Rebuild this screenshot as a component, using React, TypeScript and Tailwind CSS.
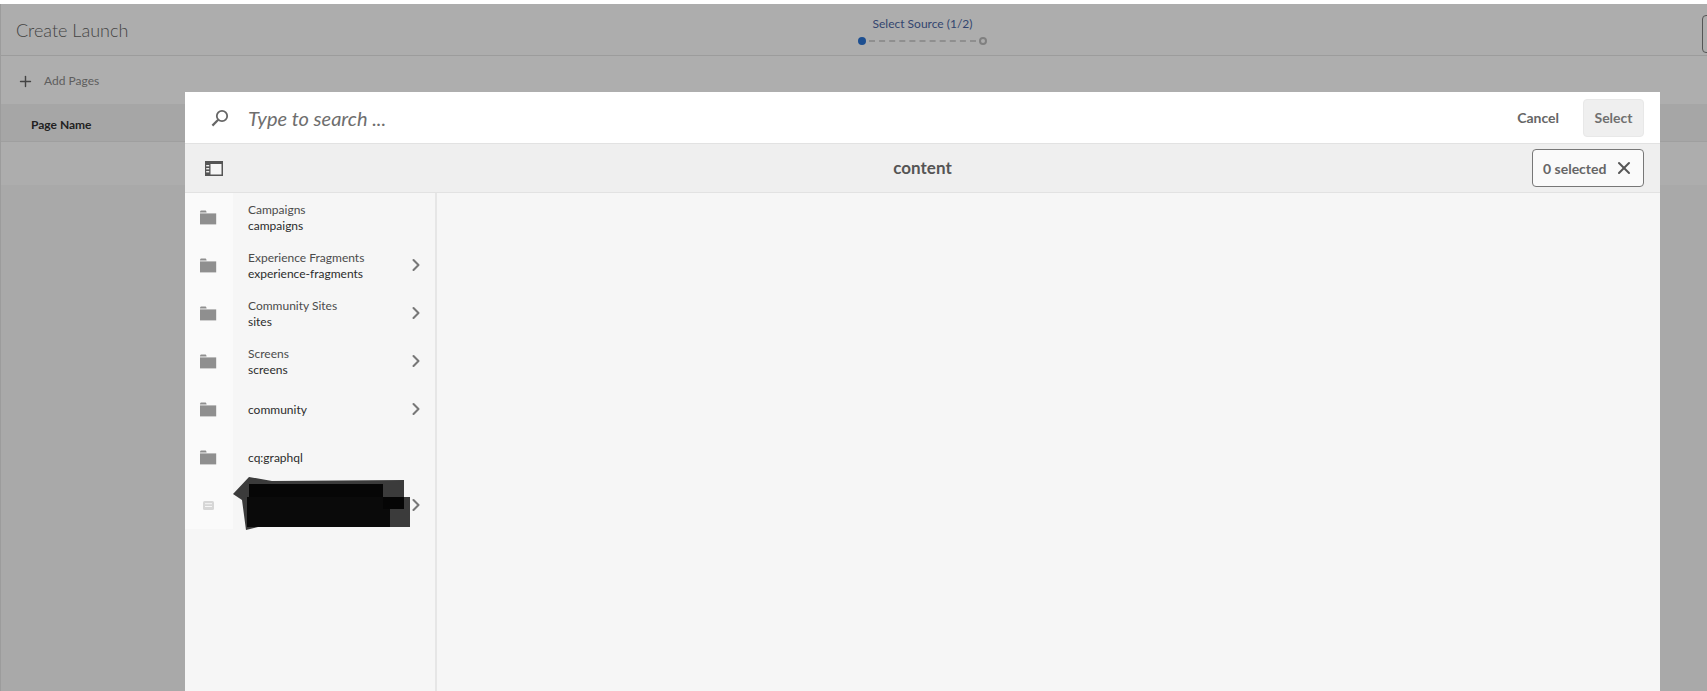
import { ChevronRight, Plus, X } from 'lucide-react';

const rows = [
  { title: 'Campaigns', name: 'campaigns', more: false },
  { title: 'Experience Fragments', name: 'experience-fragments', more: true },
  { title: 'Community Sites', name: 'sites', more: true },
  { title: 'Screens', name: 'screens', more: true },
  { title: '', name: 'community', more: true },
  { title: '', name: 'cq:graphql', more: false },
];

function FolderIcon() {
  return (
    <svg width="17" height="15" viewBox="0 0 17 15">
      <path d="M0 2.5 C0 1 .6 .6 1.5 .6 H5 C6 .6 6.4 1.2 6.6 2.4 H0 Z" fill="#8f8f8f" />
      <path d="M0 3.4 H16.2 V14.4 H0 Z" fill="#8f8f8f" />
    </svg>
  );
}

function SearchIcon() {
  return (
    <svg width="18" height="18" viewBox="0 0 18 18" fill="none" stroke="#666" strokeWidth="1.8">
      <circle cx="11" cy="7" r="5.2" />
      <path d="M7.2 10.8 L1.4 16.6" strokeWidth="2.2" />
    </svg>
  );
}

function RailIcon() {
  return (
    <svg width="18" height="15" viewBox="0 0 18 15">
      <rect x="0" y="0" width="18" height="15" fill="#555" />
      <rect x="5.5" y="3" width="11" height="10.5" fill="#f6f6f6" />
      <rect x="1.2" y="4" width="3" height="1.4" fill="#eee" />
      <rect x="1.2" y="7" width="3" height="1.4" fill="#eee" />
      <rect x="1.2" y="10" width="3" height="1.4" fill="#eee" />
    </svg>
  );
}

function PageIcon() {
  return (
    <svg width="11" height="9" viewBox="0 0 11 9">
      <rect width="11" height="9" rx="1.5" fill="#d6d6d6" />
      <rect x="2" y="2.2" width="7" height="1" fill="#f6f6f6" />
      <rect x="2" y="5" width="7" height="1" fill="#f6f6f6" />
    </svg>
  );
}

function Scribble() {
  return (
    <svg className="absolute left-[48px] top-[-4px]" width="180" height="56" viewBox="233 477 180 56">
      <path d="M233 494 L249 477 L272 481 L404 480 V497 H410 V527 H390 V527 L258 527 L246 530 L242 500 Z" fill="#3b3b3b" />
      <rect x="249" y="484" width="134" height="29" fill="#060606" />
      <rect x="247" y="497" width="143" height="30" fill="#0a0a0a" />
      <rect x="383" y="497" width="21" height="12" fill="#050505" />
    </svg>
  );
}

function Row({ title, name, more }: { title: string; name: string; more: boolean }) {
  return (
    <div className="flex h-[48px] items-center">
      <div className="flex h-full w-[48px] items-center justify-center bg-[#fafafa] pr-[2px]">
        <FolderIcon />
      </div>
      <div className="flex-1 pl-[15px] pt-[1px] text-[12px] leading-[16px] text-[#2c2c2c]">
        {title && <div className="text-[#4b4b4b]">{title}</div>}
        <div>{name}</div>
      </div>
      {more && <ChevronRight size={20} strokeWidth={2.5} className="mr-[9px] text-[#777]" />}
    </div>
  );
}

export default function App() {
  return (
    <div className="relative h-[691px] overflow-hidden bg-white pt-[4px] font-['Lato',sans-serif]">
      <div className="h-full border-l border-[#9c9c9c] bg-[#a9a9a9]">
        <header className="relative flex h-[52px] items-center border-b border-[#9c9c9c] bg-[#adadad] pl-[15px]">
          <h1 className="pt-[2px] text-[18px] font-light text-[#444]">Create Launch</h1>
          <div className="absolute left-[857px] top-[12px] flex flex-col items-center">
            <span className="text-[12px] leading-[16px] text-[#33456f]">Select Source (1/2)</span>
            <div className="mt-[5px] flex items-center gap-[3px]">
              <span className="h-[8px] w-[8px] rounded-full bg-[#1d4f91]" />
              <span className="w-[107px] border-t-2 border-dashed border-[#8f8f8f]" />
              <span className="h-[8px] w-[8px] rounded-full border-2 border-[#808080]" />
            </div>
          </div>
          <div className="absolute left-[1701px] top-[11px] h-[38px] w-[20px] rounded-[4px] border border-[#555]" />
        </header>
        <div className="flex h-[48px] items-center gap-[10px] bg-[#aeaeae] pl-[16px] pt-[2px] text-[12px] text-[#5d5d5d]">
          <Plus size={17} strokeWidth={2} className="text-[#444]" />
          <span>Add Pages</span>
        </div>
        <div className="flex h-[37px] items-center bg-[#a6a6a6] pl-[30px] pt-[4px] text-[12px] font-bold text-[#222]">
          Page Name
        </div>
        <div className="h-[44px] border-t border-[#9f9f9f] bg-[#adadad]" />
      </div>

      <div className="absolute bottom-0 left-[185px] top-[92px] flex w-[1475px] flex-col bg-[#f6f6f6]">
        <div className="flex h-[52px] shrink-0 items-center border-b border-[#e2e2e2] bg-white pl-[26px] pr-[16px]">
          <SearchIcon />
          <span className="ml-[19px] flex-1 text-[20px] italic text-[#6e6e6e]">Type to search ...</span>
          <span className="mr-[24px] text-[14px] font-bold text-[#666]">Cancel</span>
          <button className="h-[38px] w-[61px] rounded-[4px] border border-[#e8e8e8] bg-[#efefef] text-[14px] font-bold text-[#707070]">
            Select
          </button>
        </div>
        <div className="relative flex h-[49px] shrink-0 items-center justify-between border-b border-[#e2e2e2] bg-[#efefef] pl-[20px] pr-[16px]">
          <RailIcon />
          <span className="absolute left-0 right-0 text-center text-[17px] font-bold text-[#555]">content</span>
          <div className="relative flex h-[38px] w-[112px] items-center justify-between rounded-[4px] border border-[#777] bg-[#fafafa] pl-[10px] pr-[9px] text-[14px] font-bold text-[#666]">
            <span>0 selected</span>
            <X size={20} strokeWidth={2.4} className="text-[#555]" />
          </div>
        </div>
        <div className="flex min-h-0 flex-1">
          <div className="w-[252px] shrink-0 border-r-2 border-[#e6e6e6]">
            {rows.map((r) => (
              <Row key={r.name} {...r} />
            ))}
            <div className="relative flex h-[48px] items-center">
              <div className="flex h-full w-[48px] items-center justify-center bg-[#fafafa] pr-[2px]">
                <PageIcon />
              </div>
              <Scribble />
              <ChevronRight size={20} strokeWidth={2.5} className="ml-auto mr-[9px] text-[#777]" />
            </div>
          </div>
          <div className="flex-1" />
        </div>
      </div>
    </div>
  );
}
